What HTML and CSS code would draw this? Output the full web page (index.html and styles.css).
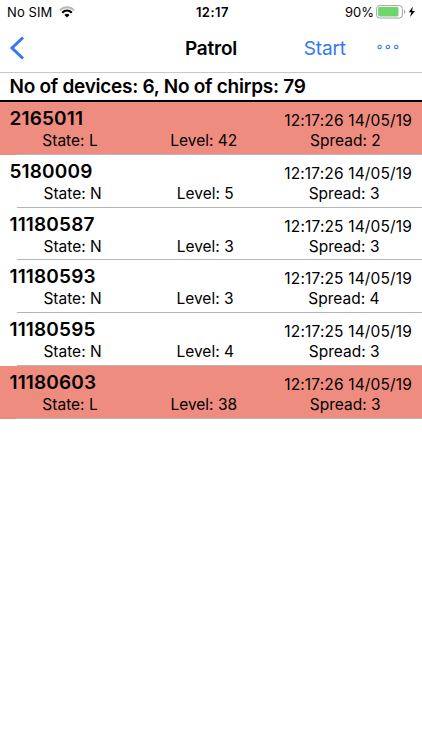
FILE: index.html
```html
<!DOCTYPE html>
<html lang="en">
<head>
  <meta charset="UTF-8">
  <meta name="viewport" content="width=device-width, initial-scale=1.0">
  <title>Patrol</title>
  <link rel="stylesheet" href="styles.css">
</head>
<body>
  <div class="status-bar">
    <div class="carrier">
      <span>No SIM</span>
      <svg class="wifi" width="16" height="12" viewBox="0 0 16 12" fill="none">
        <path d="M1 4.3C5 .3 11 .3 15 4.3" stroke="#b9b9b9" stroke-width="1.9"/>
        <path d="M3.2 6.7C6 4 10 4 12.8 6.7" stroke="#000" stroke-width="2.2"/>
        <path d="M5.4 8.9C7 7.4 9 7.4 10.6 8.9L8 11.5Z" fill="#000"/>
      </svg>
    </div>
    <span class="clock">12:17</span>
    <div class="power">
      <span>90%</span>
      <svg width="42" height="14" viewBox="0 0 42 14">
        <rect x=".6" y=".6" width="25.8" height="12.4" rx="3" fill="#fff" stroke="#a3a3a3" stroke-width="1"/>
        <rect x="2.1" y="2.1" width="20.4" height="9.4" rx="1.4" fill="#70d56c"/>
        <path d="M28 4.8C29.7 5.3 29.7 8.3 28 8.8Z" fill="#a3a3a3"/>
        <path d="M36.8 1.6L32.8 7.2H35.4L34 12L39 6H36.1Z" fill="#000"/>
      </svg>
    </div>
  </div>

  <div class="nav-bar">
    <a href="#" class="back" aria-label="Back">
      <svg width="16" height="25" viewBox="0 0 16 25" fill="none">
        <path d="M14 1.5L3 12L14 22.5" stroke="#3478f0" stroke-width="3"/>
      </svg>
    </a>
    <h1>Patrol</h1>
    <div class="actions">
      <a href="#">Start</a>
      <svg width="22" height="8" viewBox="0 0 22 8" fill="none" stroke="#3478f0" stroke-width="1.1">
        <circle cx="2.6" cy="3" r="1.7"/>
        <circle cx="10.9" cy="3" r="1.7"/>
        <circle cx="19.2" cy="3" r="1.7"/>
      </svg>
    </div>
  </div>

  <div class="summary">No of devices: 6, No of chirps: 79</div>

  <ul class="devices">
    <li class="device alert">
      <div class="top"><strong>2165011</strong><span>12:17:26 14/05/19</span></div>
      <div class="stats"><span>State: L</span><span>Level: 42</span><span>Spread: 2</span></div>
    </li>
    <li class="device">
      <div class="top"><strong>5180009</strong><span>12:17:26 14/05/19</span></div>
      <div class="stats"><span>State: N</span><span>Level: 5</span><span>Spread: 3</span></div>
    </li>
    <li class="device">
      <div class="top"><strong>11180587</strong><span>12:17:25 14/05/19</span></div>
      <div class="stats"><span>State: N</span><span>Level: 3</span><span>Spread: 3</span></div>
    </li>
    <li class="device">
      <div class="top"><strong>11180593</strong><span>12:17:25 14/05/19</span></div>
      <div class="stats"><span>State: N</span><span>Level: 3</span><span>Spread: 4</span></div>
    </li>
    <li class="device">
      <div class="top"><strong>11180595</strong><span>12:17:25 14/05/19</span></div>
      <div class="stats"><span>State: N</span><span>Level: 4</span><span>Spread: 3</span></div>
    </li>
    <li class="device alert">
      <div class="top"><strong>11180603</strong><span>12:17:26 14/05/19</span></div>
      <div class="stats"><span>State: L</span><span>Level: 38</span><span>Spread: 3</span></div>
    </li>
  </ul>
</body>
</html>
```
FILE: styles.css
```css
* {
  margin: 0;
  padding: 0;
  box-sizing: border-box;
}

body {
  background-color: #fff;
  color: #000;
  font-family: Inter, "Liberation Sans", sans-serif;
  height: 100vh;
  overflow: hidden;
}

a {
  color: #3478f0;
  text-decoration: none;
}

svg {
  display: block;
}

.status-bar {
  display: grid;
  grid-template-columns: 1fr auto 1fr;
  align-items: center;
  height: 24px;
  padding: 0 4px 0 7px;
  font-size: 13px;
}

.carrier,
.power {
  display: flex;
  align-items: center;
}

.carrier {
  gap: 7px;
  letter-spacing: 0.1px;
}

.power {
  justify-content: flex-end;
  gap: 2px;
}

.clock {
  font-weight: 600;
  letter-spacing: 0.5px;
}

.nav-bar {
  display: grid;
  grid-template-columns: minmax(0, 1fr) auto minmax(0, 1fr);
  align-items: center;
  height: 49px;
  padding: 0 9px;
  border-bottom: 1px solid #c8c8c8;
  font-size: 19px;
}

.nav-bar h1 {
  font-size: 19px;
  font-weight: 600;
  letter-spacing: -0.2px;
}

.actions {
  display: flex;
  align-items: center;
  justify-content: flex-end;
  gap: 31px;
  padding-right: 14px;
}

.actions a {
  letter-spacing: -0.1px;
}

.summary {
  height: 29px;
  padding-left: 9.5px;
  border-bottom: 2px solid #000;
  font-size: 19px;
  font-weight: 600;
  letter-spacing: -0.26px;
  line-height: 27px;
}

.devices {
  list-style: none;
}

.device {
  height: 52.8px;
  padding-top: 4px;
  background: linear-gradient(#b5b5b5, #b5b5b5) 17px 100% / 100% 1px no-repeat;
}

.device.alert {
  background-color: #ef8c80;
}

.top {
  display: flex;
  justify-content: space-between;
  height: 24px;
  padding: 0 10px 0 9.5px;
  font-size: 15.5px;
  letter-spacing: 0.15px;
  line-height: 29px;
}

.top strong {
  font-size: 19px;
  font-weight: 600;
  line-height: 25px;
}

.stats {
  display: flex;
  justify-content: space-around;
  padding: 0 5px 0 6px;
  font-size: 15.5px;
  line-height: 21px;
}
```
